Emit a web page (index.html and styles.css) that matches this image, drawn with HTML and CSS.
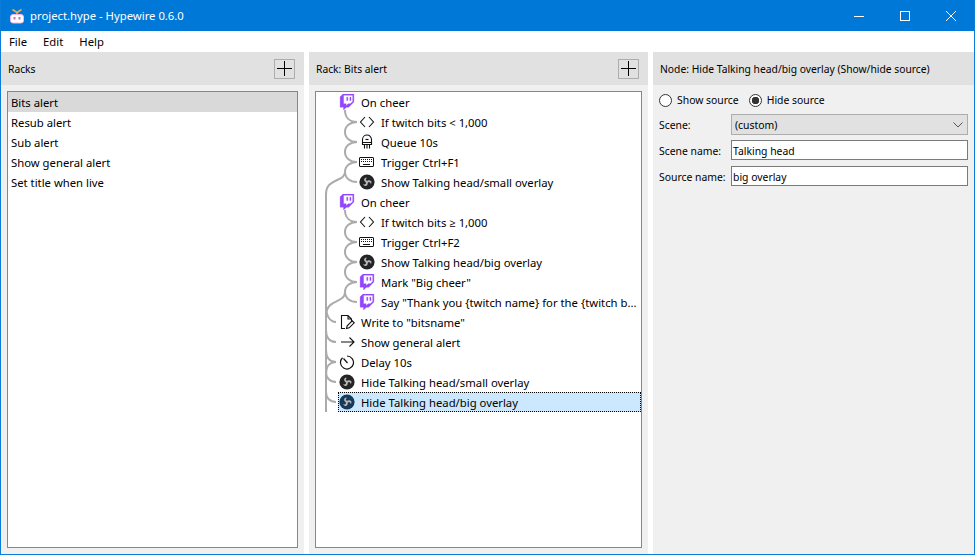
FILE: index.html
```html
<!DOCTYPE html>
<html lang="en">
<head>
<meta charset="utf-8">
<title>project.hype - Hypewire 0.6.0</title>
<link rel="stylesheet" href="styles.css">
</head>
<body>
<svg class="defs" width="0" height="0" aria-hidden="true">
  <symbol id="i-twitch" viewBox="1.2 0 21.6 24"><path fill="#9146ff" stroke="#9146ff" stroke-width=".5" fill-rule="evenodd" d="M11.571 4.714h1.715v5.143H11.57zm4.715 0H18v5.143h-1.714zM6 0L1.714 4.286v15.428h5.143V24l4.286-4.286h3.428L22.286 12V0zm14.571 11.143l-3.428 3.428h-3.429l-3 3v-3H6.857V1.714h13.714Z"/></symbol>
  <symbol id="i-code" viewBox="0 0 16 16"><path fill="none" stroke="#111" stroke-width="1.1" d="M6 3L1.500 8 6 13M10 3l4.500 5L10 13"/></symbol>
  <symbol id="i-queue" viewBox="0 0 16 16"><path fill="none" stroke="#111" stroke-width="1.1" d="M3.500 10.500V5.500a4.500 4.500 0 0 1 9 0v5zM3.500 8.500h9M5.500 10.500V14.500M8 10.500V14.500M10.500 10.500V14.500"/><path stroke="#111" stroke-width="1.200" d="M6.500 5.500h3"/></symbol>
  <symbol id="i-keys" viewBox="0 0 16 16"><rect x="0.500" y="3.500" width="14" height="9" rx=".5" fill="none" stroke="#111"/><path stroke="#111" stroke-dasharray="1 1" d="M2 5.500h11M2 7.500h11"/><path stroke="#111" d="M4 10.500h7"/></symbol>
  <symbol id="i-obs" viewBox="0 0 16 16"><circle cx="8" cy="8" r="7.600" fill="currentColor"/><g fill="#b8b8b8"><path id="blade" d="M8 8.200C6 8.400 4.800 6.800 5.200 5C5.600 3.700 7.200 3.300 8.300 3.900C7.300 4 6.600 4.800 6.900 5.800C7.100 6.500 8 6.900 9 6.700Z"/><use href="#blade" transform="rotate(120 8 8)"/><use href="#blade" transform="rotate(240 8 8)"/></g></symbol>
  <symbol id="i-write" viewBox="0 0 16 16"><path fill="none" stroke="#111" stroke-width="1.100" d="M6 14.500H2.500V1.500H9L12.500 5V7M9 1.500V5h3.500M7.500 14.500l.7-2.700 5-5 2 2-5 5z"/></symbol>
  <symbol id="i-arrow" viewBox="0 0 16 16"><path fill="none" stroke="#111" stroke-width="1.100" d="M2 8h13M10.500 3.500L15 8l-4.500 4.500"/></symbol>
  <symbol id="i-clock" viewBox="0 0 16 16"><path fill="none" stroke="#111" stroke-width="1.200" d="M3.500 3.800A6.500 6.500 0 1 0 8 2M4.500 4.500L8.500 9"/></symbol>
</svg>

<div class="window">
  <header class="titlebar">
    <svg class="appicon" viewBox="0 0 16 16" width="16" height="16" aria-hidden="true">
      <path fill="none" stroke="#f5a84a" stroke-width="1.600" d="M3.500 1.500L8 4.500L12.500 1.500M8 4.500V7"/>
      <rect x="1.500" y="6.500" width="13" height="8.500" rx="2.500" fill="#fff" stroke="#f0b8e8"/>
      <rect x="4.500" y="9" width="2" height="2.500" fill="#d070a8"/>
      <rect x="9.500" y="9" width="2" height="2.500" fill="#d070a8"/>
    </svg>
    <span class="wintitle">project.hype - Hypewire 0.6.0</span>
    <div class="winbtns">
      <svg class="winbtn" viewBox="0 0 46 30" width="46" height="30" aria-hidden="true"><path stroke="#fff" d="M18 15.500h10"/></svg>
      <svg class="winbtn" viewBox="0 0 46 30" width="46" height="30" aria-hidden="true"><rect x="18.500" y="10.500" width="9" height="9" fill="none" stroke="#fff"/></svg>
      <svg class="winbtn" viewBox="0 0 46 30" width="46" height="30" aria-hidden="true"><path stroke="#fff" d="M18 10l10 10M28 10L18 20"/></svg>
    </div>
  </header>
  <nav class="menubar"><span class="menuitem">File</span><span class="menuitem">Edit</span><span class="menuitem">Help</span></nav>
  <main class="panes">
    <section class="pane pane-racks">
      <div class="panehead"><span>Racks</span>
        <button class="addbtn" type="button" aria-label="Add"><svg viewBox="0 0 15 15" width="15" height="15"><path stroke="#000" d="M7.500 0v15M0 7.500h15"/></svg></button>
      </div>
      <div class="listwrap">
        <ul class="list">
          <li class="listrow listrow-sel">Bits alert</li>
          <li class="listrow">Resub alert</li>
          <li class="listrow">Sub alert</li>
          <li class="listrow">Show general alert</li>
          <li class="listrow">Set title when live</li>
        </ul>
      </div>
    </section>
    <section class="pane pane-rack">
      <div class="panehead"><span>Rack: Bits alert</span>
        <button class="addbtn" type="button" aria-label="Add"><svg viewBox="0 0 15 15" width="15" height="15"><path stroke="#000" d="M7.500 0v15M0 7.500h15"/></svg></button>
      </div>
      <div class="listwrap">
        <div class="tree">
          <svg class="wires" width="100" height="340" viewBox="316 92 100 340" aria-hidden="true">
            <g fill="none" stroke="#ababab" stroke-width="2">
              <path d="M345 110C345 117 349 122 357 122C350 122 345 126 345 132C345 138 350 142 357 142C350 142 345 146 345 152C345 158 350 162 357 162C350 162 345 166 345 172C345 178 350 182 357 182"/>
              <path d="M345 172C345 182 326 178 326 194"/>
              <path d="M345 210C345 217 349 222 357 222C350 222 345 226 345 232C345 238 350 242 357 242C350 242 345 246 345 252C345 258 350 262 357 262C350 262 345 266 345 272C345 278 350 282 357 282C350 282 345 286 345 292C345 298 350 302 357 302"/>
              <path d="M345 292C345 304 326 298 326 316"/>
              <path d="M326 194V412"/>
              <path d="M326 306C326 316 330 322 336 322"/>
              <path d="M326 330C326 338 330 342 336 342"/>
              <path d="M326 350C326 358 330 362 336 362C330 362 326 366 326 374"/>
              <path d="M326 372C326 378 330 382 336 382"/>
              <path d="M326 392C326 398 330 402 336 402"/>
            </g>
          </svg>
          <div class="node n0"><svg class="ico"><use href="#i-twitch"/></svg><span>On cheer</span></div>
          <div class="node n1"><svg class="ico"><use href="#i-code"/></svg><span>If twitch bits &lt; 1,000</span></div>
          <div class="node n1"><svg class="ico"><use href="#i-queue"/></svg><span>Queue 10s</span></div>
          <div class="node n1"><svg class="ico"><use href="#i-keys"/></svg><span>Trigger Ctrl+F1</span></div>
          <div class="node n1"><svg class="ico"><use href="#i-obs"/></svg><span>Show Talking head/small overlay</span></div>
          <div class="node n0"><svg class="ico"><use href="#i-twitch"/></svg><span>On cheer</span></div>
          <div class="node n1"><svg class="ico"><use href="#i-code"/></svg><span>If twitch bits ≥ 1,000</span></div>
          <div class="node n1"><svg class="ico"><use href="#i-keys"/></svg><span>Trigger Ctrl+F2</span></div>
          <div class="node n1"><svg class="ico"><use href="#i-obs"/></svg><span>Show Talking head/big overlay</span></div>
          <div class="node n1"><svg class="ico"><use href="#i-twitch"/></svg><span>Mark "Big cheer"</span></div>
          <div class="node n1"><svg class="ico"><use href="#i-twitch"/></svg><span>Say "Thank you {twitch name} for the {twitch b...</span></div>
          <div class="node n0"><svg class="ico"><use href="#i-write"/></svg><span>Write to "bitsname"</span></div>
          <div class="node n0"><svg class="ico"><use href="#i-arrow"/></svg><span>Show general alert</span></div>
          <div class="node n0"><svg class="ico"><use href="#i-clock"/></svg><span>Delay 10s</span></div>
          <div class="node n0"><svg class="ico"><use href="#i-obs"/></svg><span>Hide Talking head/small overlay</span></div>
          <div class="node n0 node-sel"><svg class="ico"><use href="#i-obs"/></svg><span>Hide Talking head/big overlay</span></div>
        </div>
      </div>
    </section>
    <section class="pane pane-node">
      <div class="panehead"><span>Node: Hide Talking head/big overlay (Show/hide source)</span></div>
      <div class="form">
        <div class="radios">
          <label class="radio"><span class="radiomark"></span>Show source</label>
          <label class="radio"><span class="radiomark radiomark-on"></span>Hide source</label>
        </div>
        <div class="field">
          <span class="fieldlabel">Scene:</span>
          <div class="combo"><span>(custom)</span><svg viewBox="0 0 10 6" width="10" height="6" aria-hidden="true"><path fill="none" stroke="#555" d="M.5.500L5 5 9.500.5"/></svg></div>
        </div>
        <div class="field">
          <span class="fieldlabel">Scene name:</span>
          <div class="textbox">Talking head</div>
        </div>
        <div class="field">
          <span class="fieldlabel">Source name:</span>
          <div class="textbox">big overlay</div>
        </div>
      </div>
    </section>
  </main>
</div>
</body>
</html>
```
FILE: styles.css
```css
* { box-sizing: border-box; }
html, body { margin: 0; padding: 0; }
body { width: 975px; height: 555px; overflow: hidden; background: #fff; font: 11.3px/16px "Noto Sans", "Open Sans", sans-serif; color: #000; }
.defs { display: block; height: 0; }
.window { width: 975px; height: 555px; display: flex; flex-direction: column; border: 1px solid #0b7cd8; border-top: 0; }
.titlebar { height: 31px; flex: none; background: #0078d7; color: #fff; display: flex; align-items: center; padding-left: 8px; }
.appicon { flex: none; }
.wintitle { margin-left: 5px; }
.winbtns { margin-left: auto; display: flex; }
.winbtn { display: block; width: 46px; height: 30px; }
.menubar { height: 21px; flex: none; background: #fff; display: flex; align-items: center; padding-left: 8px; gap: 16px; }
.panes { flex: 1; min-height: 0; display: flex; background: #fff; gap: 5px; }
.pane { background: #f0f0f0; display: flex; flex-direction: column; min-width: 0; }
.pane-racks { width: 303px; flex: none; }
.pane-rack { width: 339px; flex: none; }
.pane-node { flex: 1; }
.panehead { height: 33px; flex: none; background: #e1e1e1; display: flex; align-items: center; justify-content: space-between; padding: 0 9px 0 7px; white-space: nowrap; font-size: 10.3px; }
.addbtn { width: 21px; height: 20px; padding: 0; border: 1px solid #adadad; background: #e1e1e1; display: flex; align-items: center; justify-content: center; }
.addbtn svg { display: block; }
.listwrap { flex: 1; min-height: 0; padding: 6px; display: flex; }
.list { flex: 1; min-width: 0; margin: 0; padding: 0; list-style: none; background: #fff; border: 1px solid #828790; }
.listrow { height: 20px; line-height: 21px; padding-left: 3px; }
.listrow-sel { background: #d9d9d9; }
.tree { flex: 1; min-width: 0; position: relative; background: #fff; border: 1px solid #828790; }
.wires { position: absolute; left: 0; top: 0; }
.node { height: 20px; line-height: 21px; display: flex; align-items: center; gap: 6px; position: relative; white-space: nowrap; }
.n0 { padding-left: 23px; }
.n1 { padding-left: 43px; }
.ico { width: 16px; height: 16px; flex: none; color: #242424; }
.node-sel { margin-left: 22px; padding-left: 1px; background: #cce8ff; outline: 1px dotted #000; outline-offset: -1px; }
.node-sel .ico { color: #17395a; }
.form { padding: 6px 6px 0 6px; display: flex; flex-direction: column; font-size: 10.4px; }
.radios { display: flex; height: 18px; align-items: center; gap: 10px; margin-bottom: 5px; white-space: nowrap; }
.radio { display: flex; align-items: center; gap: 5px; }
.radiomark { width: 13px; height: 13px; border: 1px solid #333; border-radius: 50%; background: #fff; display: block; flex: none; }
.radiomark-on { background: radial-gradient(circle, #333 0 3.5px, #fff 4px); }
.field { height: 21px; display: flex; align-items: flex-start; margin-bottom: 5px; white-space: nowrap; }
.fieldlabel { width: 72px; flex: none; line-height: 23px; }
.combo { flex: 1; height: 21px; background: #e1e1e1; border: 1px solid #adadad; display: flex; align-items: center; justify-content: space-between; padding: 0 4px 0 3px; }
.textbox { flex: 1; height: 20px; background: #fff; border: 1px solid #7a7a7a; line-height: 20px; padding-left: 1px; }
```
